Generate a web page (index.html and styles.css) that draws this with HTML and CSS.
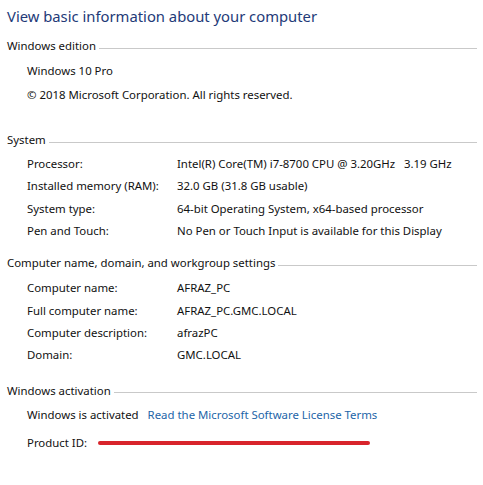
FILE: index.html
```html
<!DOCTYPE html>
<html lang="en">
<head>
<meta charset="utf-8">
<title>System</title>
<link rel="stylesheet" href="styles.css">
</head>
<body>
<div class="page">
  <h1 class="title">View basic information about your computer</h1>

  <div class="section-head"><span class="section-name">Windows edition</span><span class="rule"></span></div>
  <div class="edition">
    <div class="edition-row">Windows 10 Pro</div>
    <div class="edition-row">© 2018 Microsoft Corporation. All rights reserved.</div>
  </div>

  <div class="section-head head-system"><span class="section-name">System</span><span class="rule"></span></div>
  <div class="props">
    <div class="label">Processor:</div><div class="value">Intel(R) Core(TM) i7-8700 CPU @ 3.20GHz&nbsp;&nbsp;&nbsp;3.19 GHz</div>
    <div class="label">Installed memory (RAM):</div><div class="value">32.0 GB (31.8 GB usable)</div>
    <div class="label">System type:</div><div class="value">64-bit Operating System, x64-based processor</div>
    <div class="label">Pen and Touch:</div><div class="value">No Pen or Touch Input is available for this Display</div>
  </div>

  <div class="section-head head-computer"><span class="section-name">Computer name, domain, and workgroup settings</span><span class="rule"></span></div>
  <div class="props props-computer">
    <div class="label">Computer name:</div><div class="value">AFRAZ_PC</div>
    <div class="label">Full computer name:</div><div class="value">AFRAZ_PC.GMC.LOCAL</div>
    <div class="label">Computer description:</div><div class="value">afrazPC</div>
    <div class="label">Domain:</div><div class="value">GMC.LOCAL</div>
  </div>

  <div class="section-head head-activation"><span class="section-name">Windows activation</span><span class="rule"></span></div>
  <div class="activation">
    <div class="act-row"><span>Windows is activated</span><a class="link" href="#">Read the Microsoft Software License Terms</a></div>
    <div class="act-row product"><span>Product ID:</span><span class="redact"></span></div>
  </div>
</div>
</body>
</html>
```

FILE: styles.css
```css
html, body {
  margin: 0;
  padding: 0;
  background: #ffffff;
}

body {
  font-family: "Noto Sans", "Open Sans", "Liberation Sans", sans-serif;
  font-size: 11.4px;
  color: #111111;
}

.page {
  padding: 6px 6px 0 7px;
}

.title {
  margin: 0;
  font-size: 14.8px;
  font-weight: normal;
  line-height: 20px;
  color: #233a78;
}

.section-head {
  display: flex;
  align-items: center;
  height: 18px;
  margin-top: 11px;
}

.section-name {
  line-height: 18px;
  white-space: nowrap;
}

.rule {
  flex: 1;
  height: 1px;
  background: #c9c9c9;
  margin-left: 3px;
  margin-top: 4px;
}

.head-system { margin-top: 24px; }
.head-computer { margin-top: 12px; }
.head-activation { margin-top: 15px; }

.edition {
  margin-top: 4px;
  padding-left: 20px;
}

.edition-row {
  line-height: 24px;
  height: 24px;
}

.props {
  margin-top: 4px;
  padding-left: 20px;
  display: grid;
  grid-template-columns: 150px 1fr;
  grid-auto-rows: 22.33px;
  align-items: center;
}

.props-computer { margin-top: 5px; }

.label, .value {
  white-space: nowrap;
  line-height: 22px;
}

.activation {
  margin-top: 4px;
  padding-left: 20px;
}

.act-row {
  display: flex;
  align-items: center;
  height: 22px;
  line-height: 22px;
}

.link {
  margin-left: 9px;
  color: #2365a8;
  text-decoration: none;
}

.product {
  margin-top: 6px;
}

.redact {
  display: block;
  width: 272px;
  height: 4px;
  border-radius: 2px;
  background: #d8242b;
  margin-left: 11px;
}
```
